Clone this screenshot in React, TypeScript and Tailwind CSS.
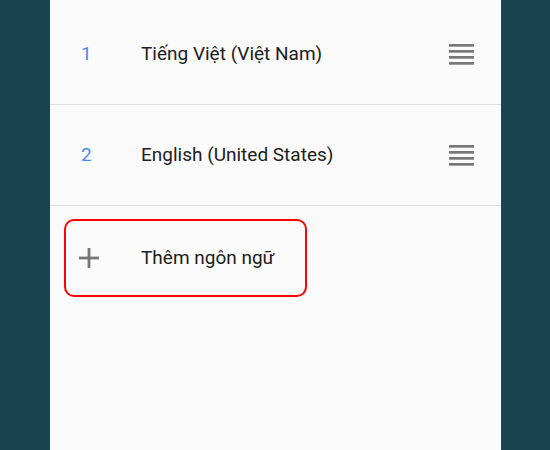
import React from "react";

const languages = [
  { n: 1, label: "Tiếng Việt (Việt Nam)" },
  { n: 2, label: "English (United States)" },
];

function DragHandle() {
  return (
    <svg width="25" height="21" viewBox="0 0 25 21" className="shrink-0">
      {[0, 6, 12, 18].map((y) => (
        <rect key={y} x="0" y={y} width="25" height="2.7" fill="#777777" />
      ))}
    </svg>
  );
}

export default function App() {
  return (
    <div
      className="w-[550px] h-[450px] bg-[#1b4451] pl-[50px] overflow-hidden"
      style={{ fontFamily: "Roboto, 'Noto Sans', sans-serif" }}
    >
      <div className="w-[451px] h-full bg-[#fafafa] flex flex-col">
        {languages.map((lang, i) => (
          <div
            key={lang.n}
            className={`flex items-center border-b-[1.5px] border-[#e0e0e0] pl-[31px] pr-[27px] ${
              i === 0 ? "h-[105px] pt-[4px]" : "h-[101px]"
            }`}
          >
            <span className="w-[60px] text-[19px] text-[#4a8af4]">{lang.n}</span>
            <span className="flex-1 text-[19px] text-[#202020]">{lang.label}</span>
            <DragHandle />
          </div>
        ))}

        <div className="pt-[13px] pl-[14px]">
          <button className="w-[243px] h-[78px] flex items-center border-2 border-[#ff0000] rounded-[10px] pl-[13px]">
            <svg width="20" height="20" viewBox="0 0 20 20" className="shrink-0">
              <rect x="8.6" y="0" width="2.8" height="20" fill="#777777" />
              <rect x="0" y="8.6" width="20" height="2.8" fill="#777777" />
            </svg>
            <span className="ml-[42px] text-[19px] text-[#202020]">Thêm ngôn ngữ</span>
          </button>
        </div>
      </div>
    </div>
  );
}
